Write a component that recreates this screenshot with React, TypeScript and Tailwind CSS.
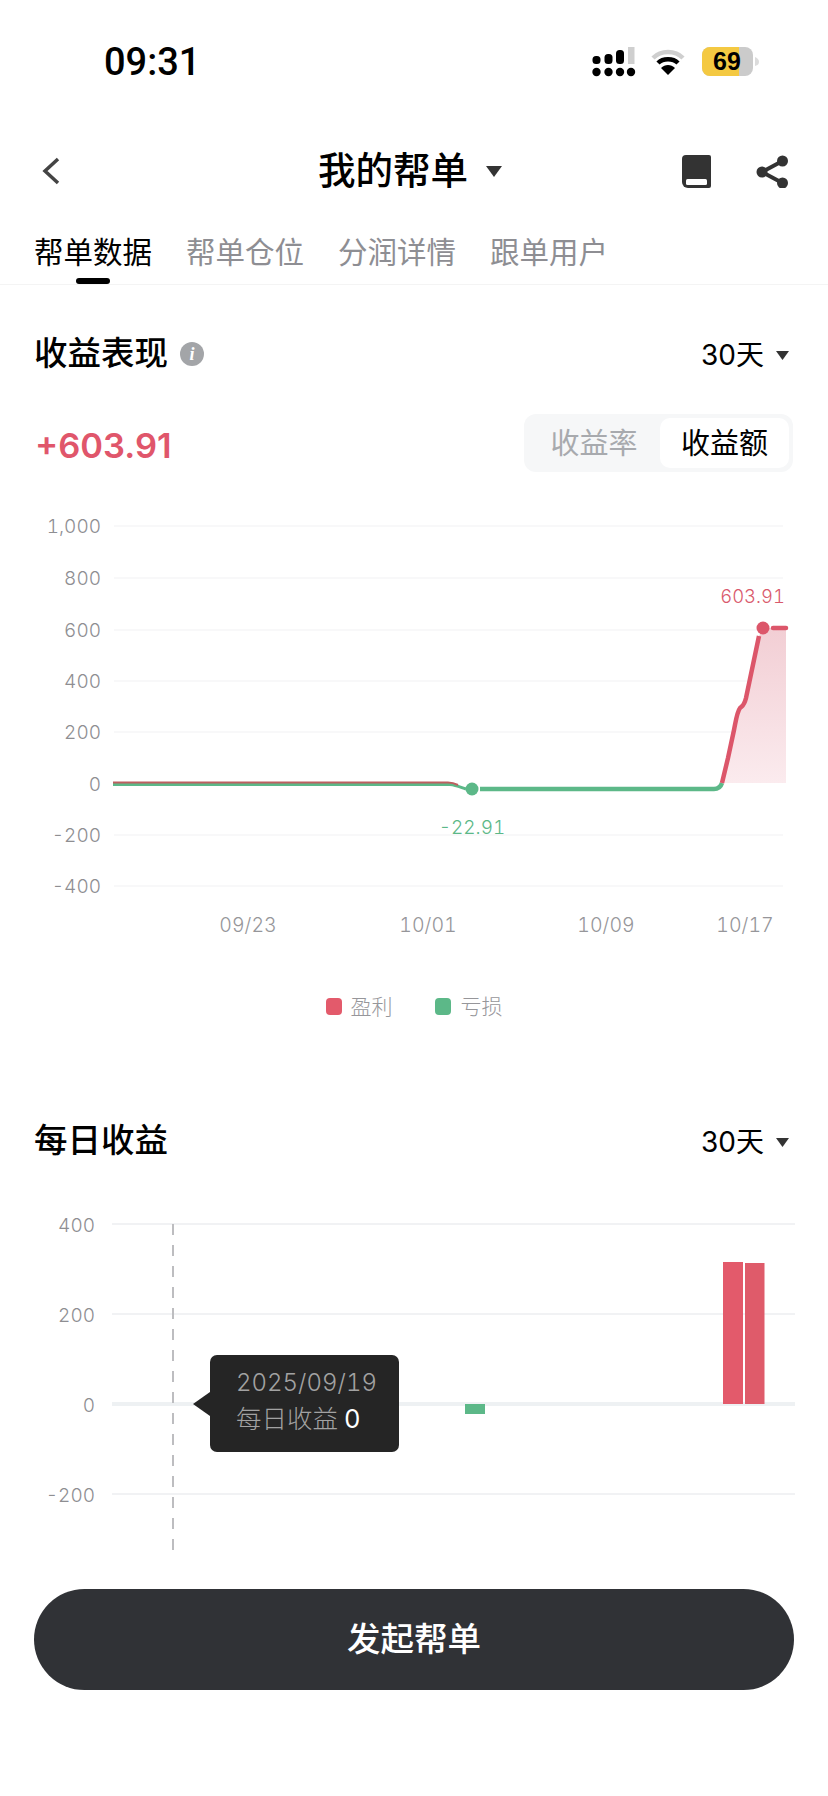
import React from 'react';

const SANS = 'font-["Inter","Noto_Sans_CJK_SC",sans-serif]';
const CHART_FONT = 'Inter, "Noto Sans CJK SC", sans-serif';

const StatusBar: React.FC = () => (
  <div className="h-[124px] flex items-center pl-[104px] pr-[68px] justify-between">
    <span className='font-["Roboto",sans-serif] font-medium text-[38px] leading-none text-black'>
      09:31
    </span>
    <svg width="170" height="32" viewBox="590 46 170 32">
      {/* signal */}
      <rect x="592.5" y="56" width="8" height="8" rx="3.5" fill="#000" />
      <rect x="604.5" y="54" width="8" height="10" rx="3.5" fill="#000" />
      <rect x="616" y="50" width="8" height="14" rx="3.5" fill="#000" />
      <rect x="628" y="47" width="6.5" height="17" fill="#cfcfcf" />
      {[596.5, 608.5, 620, 631].map((x) => (
        <circle key={x} cx={x} cy="72" r="4.2" fill="#000" />
      ))}
      {/* wifi */}
      <path d="M653 58 C661 50 675 50 683 58" fill="none" stroke="#cfcfcf" strokeWidth="4.5" />
      <path d="M658 63 C663 58 673 58 678 63" fill="none" stroke="#000" strokeWidth="4.5" />
      <path d="M661 68 L668 75 L675 68 C671 64 665 64 661 68 Z" fill="#000" />
      {/* battery */}
      <rect x="702" y="47" width="51" height="29" rx="8" fill="#cbcbcb" />
      <path d="M710 47 H739 V76 H710 A8 8 0 0 1 702 68 V55 A8 8 0 0 1 710 47 Z" fill="#f4c942" />
      <path d="M755 57 C758 58 759 60 759 62 C759 64 758 65 755 66 Z" fill="#dcdcdc" />
      <text x="727" y="70" textAnchor="middle" fontFamily='"Liberation Sans", sans-serif' fontWeight="700" fontSize="25" fill="#000">
        69
      </text>
    </svg>
  </div>
);

const NavBar: React.FC = () => (
  <div className="h-[94px] flex items-center pl-[42px] pr-[39px]">
    <svg width="18" height="28" viewBox="0 0 18 28">
      <path d="M16 2 L3 14 L16 26" fill="none" stroke="#444" strokeWidth="3.5" />
    </svg>
    <span className="ml-[258px] text-[37.5px] leading-none font-medium text-black">我的帮单</span>
    <svg className="ml-[18px]" width="16" height="11" viewBox="0 0 16 11">
      <path d="M0 0 H16 L8 11 Z" fill="#333" />
    </svg>
    <svg className="ml-auto" width="29" height="33" viewBox="0 0 29 33">
      <path d="M4 0 H27 A2 2 0 0 1 29 2 V31 A2 2 0 0 1 27 33 H6 A6 6 0 0 1 0 27 V4 A4 4 0 0 1 4 0 Z" fill="#333" />
      <rect x="4" y="24" width="21" height="6" rx="1.5" fill="#fff" />
    </svg>
    <svg className="ml-[45px]" width="33" height="33" viewBox="0 0 33 33">
      <path d="M26.5 6 L6 17 L26.5 28" fill="none" stroke="#333" strokeWidth="4" />
      <circle cx="26.5" cy="6" r="5.5" fill="#333" />
      <circle cx="6" cy="17" r="5.5" fill="#333" />
      <circle cx="26.5" cy="28" r="5.5" fill="#333" />
    </svg>
  </div>
);

const Tabs: React.FC = () => (
  <div className="flex gap-[34px] px-[34px] pt-[14px] border-b border-[#f4f4f4]">
    {['帮单数据', '帮单仓位', '分润详情', '跟单用户'].map((tab, i) => (
      <div key={tab} className="flex flex-col items-center">
        <span className={`text-[29.5px] leading-[40px] ${i === 0 ? 'text-black' : 'text-[#8e8e93]'}`}>
          {tab}
        </span>
        <div className={`mt-[6px] h-[6px] w-[34px] rounded-full ${i === 0 ? 'bg-black' : 'bg-transparent'}`} />
      </div>
    ))}
  </div>
);

const SectionHeader: React.FC<{ title: string; info?: boolean; className: string }> = ({ title, info, className }) => (
  <div className={`h-[46px] px-[34px] flex items-center justify-between ${className}`}>
    <div className="flex items-center">
      <span className="text-[33.5px] leading-none font-medium text-black">{title}</span>
      {info && (
        <span className='ml-[12px] w-[24px] h-[24px] rounded-full bg-[#a3a5a8] flex items-center justify-center font-["Liberation_Serif",serif] italic font-bold text-[18px] leading-none text-white'>
          i
        </span>
      )}
    </div>
    <div className="flex items-center pr-[5px] pt-[2px]">
      <span className="text-[28px] leading-none text-black">30天</span>
      <svg className="ml-[12px]" width="13" height="9" viewBox="0 0 13 9">
        <path d="M0 0 H13 L6.5 9 Z" fill="#333" />
      </svg>
    </div>
  </div>
);

const YieldChart: React.FC = () => {
  const labels: [string, number][] = [
    ['1,000', 526],
    ['800', 578],
    ['600', 630],
    ['400', 681],
    ['200', 732],
    ['0', 784],
    ['-200', 835],
    ['-400', 886],
  ];
  return (
    <svg className="block tabular-nums" width="828" height="460" viewBox="0 500 828 460" fontFamily={CHART_FONT}>
      <defs>
        <linearGradient id="area" x1="0" y1="0" x2="0" y2="1">
          <stop offset="0" stopColor="#f2ced4" />
          <stop offset="1" stopColor="#fbebee" />
        </linearGradient>
      </defs>
      {labels.map(([label, y]) => (
        <g key={label}>
          {label !== '0' && <rect x="114" y={y - 1} width="669" height="2" fill="#f8f8f9" />}
          <text x="101" y={y + 7} textAnchor="end" fontSize="19" fontWeight="300" fill="#8e8e92">
            {label}
          </text>
        </g>
      ))}
      <path
        d="M722 783 L728 758 L734 730 C736 720 737 712 740 708 C743 705 744 706 746 698 L759 636 L763 628 H786 V783 Z"
        fill="url(#area)"
      />
      <path d="M113 784.5 H450 C456 785 460 787 466 789" fill="none" stroke="#5cb888" strokeWidth="3" />
      <path d="M113 782.5 H448 C452 782.5 455 783.5 458 785" fill="none" stroke="#bd5f60" strokeWidth="2" />
      <path d="M480 789 H714 Q720 789 722 783" fill="none" stroke="#5cb888" strokeWidth="4.5" />
      <path
        d="M722 783 L728 758 L734 730 C736 720 737 712 740 708 C743 705 744 706 746 698 L759 636"
        fill="none"
        stroke="#dc566a"
        strokeWidth="4.5"
      />
      <path d="M773 628 H786" stroke="#dc566a" strokeWidth="4.5" strokeLinecap="round" />
      <circle cx="472" cy="789" r="6.5" fill="#5cb888" />
      <circle cx="763" cy="628" r="6.5" fill="#dc566a" />
      <text x="785" y="603" textAnchor="end" fontSize="18.5" fontWeight="300" fill="#d9596c">
        603.91
      </text>
      <text x="472" y="834" textAnchor="middle" fontSize="19" fontWeight="300" fill="#5cb888">
        -22.91
      </text>
      {[
        ['09/23', 248],
        ['10/01', 428],
        ['10/09', 606],
        ['10/17', 745],
      ].map(([label, x]) => (
        <text key={label} x={x} y="932" textAnchor="middle" fontSize="19.5" fontWeight="300" fill="#96969a">
          {label}
        </text>
      ))}
    </svg>
  );
};

const DailyChart: React.FC = () => (
  <div className="relative h-[360px] tabular-nums">
    <svg className="block" width="828" height="360" viewBox="0 1200 828 360" fontFamily={CHART_FONT}>
      {[
        ['400', 1224, 2],
        ['200', 1314, 2],
        ['0', 1404, 4],
        ['-200', 1494, 2],
      ].map(([label, y, h]) => (
        <g key={label}>
          <rect x="112" y={(y as number) - (h as number) / 2} width="683" height={h} fill={h === 4 ? '#eef1f3' : '#f1f2f4'} />
          <text x="95" y={(y as number) + 8} textAnchor="end" fontSize="19" fontWeight="300" fill="#8e8e92">
            {label}
          </text>
        </g>
      ))}
      <path d="M173 1224 V1552" stroke="#bdbdc0" strokeWidth="2" strokeDasharray="11 10" />
      <rect x="465" y="1404" width="20" height="10" fill="#5cb888" />
      <rect x="723" y="1262" width="20" height="142" fill="#e35a6b" />
      <rect x="745" y="1263" width="19.5" height="141" fill="#df5b6a" />
    </svg>
    <div className="absolute left-[210px] top-[155px] w-[189px] h-[97px] rounded-[7px] bg-[#252525] pl-[26px] pt-[13px]">
      <div className="absolute left-[-17px] top-[37px] w-0 h-0 border-y-[12px] border-y-transparent border-r-[17px] border-r-[#252525]" />
      <div className="text-[24px] font-light leading-[30px] whitespace-nowrap text-[#a2a2a2]">2025/09/19</div>
      <div className="mt-[6px] flex items-center text-[25.5px] font-light leading-[30px] whitespace-nowrap text-[#a2a2a2]">
        每日收益<span className="ml-[6px] text-white font-normal">0</span>
      </div>
    </div>
  </div>
);

const App: React.FC = () => (
  <div className={`w-[828px] h-[1796px] bg-white overflow-hidden ${SANS}`}>
    <StatusBar />
    <NavBar />
    <Tabs />

    <SectionHeader title="收益表现" info className="mt-[46px]" />
    <div className="mt-[37px] px-[35px] flex items-center justify-between">
      <span className="pt-[6px] text-[34.5px] leading-none font-semibold text-[#e0566b]">+603.91</span>
      <div className="h-[58px] w-[269px] rounded-[12px] bg-[#f6f7f8] p-[4px] flex items-center">
        <div className="flex-1 text-center text-[29px] leading-none text-[#a8aaae]">收益率</div>
        <div className="w-[129px] h-[50px] rounded-[10px] bg-white flex items-center justify-center text-[29px] leading-none text-black">
          收益额
        </div>
      </div>
    </div>

    <div className="mt-[28px]">
      <YieldChart />
    </div>

    <div className="mt-[30px] h-[32px] flex items-center justify-center">
      <span className="w-[16px] h-[17px] rounded-[4px] bg-[#e35a6b]" />
      <span className="ml-[9px] text-[21px] leading-none font-light text-[#96969a]">盈利</span>
      <span className="ml-[42px] w-[16px] h-[17px] rounded-[4px] bg-[#5cb888]" />
      <span className="ml-[10px] text-[21px] leading-none font-light text-[#96969a]">亏损</span>
    </div>

    <SectionHeader title="每日收益" className="mt-[96px]" />
    <div className="mt-[36px]">
      <DailyChart />
    </div>

    <button className="mt-[29px] ml-[34px] w-[760px] h-[101px] rounded-full bg-[#303236] text-white text-[33.5px] font-medium leading-none">
      发起帮单
    </button>
  </div>
);

export default App;
